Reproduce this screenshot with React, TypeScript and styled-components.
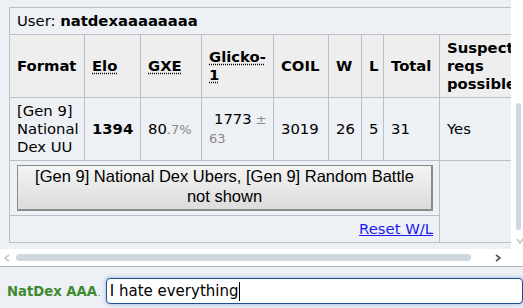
import React from "react";
import styled, { createGlobalStyle } from "styled-components";

const GlobalStyle = createGlobalStyle`
  html, body { margin: 0; padding: 0; }
  body {
    background: #edf0f4;
    font-family: "DejaVu Sans", Verdana, sans-serif;
  }
`;

const Frame = styled.div`
  width: 523px;
  height: 308px;
  display: flex;
  flex-direction: column;
  overflow: hidden;
  background: #edf0f4;
`;

const Viewport = styled.div`
  display: grid;
  grid-template-columns: 511px 12px;
  grid-template-rows: 249px 17px;
  border-bottom: 1px solid #b0b5ba;
`;

const Content = styled.div`
  overflow: hidden;
  padding: 7px 0 0 9px;
`;

const Table = styled.table`
  border-collapse: collapse;
  table-layout: fixed;
  width: 530px;
  font-size: 14.8px;
  line-height: 18px;
  color: #000;

  td,
  th {
    border: 1px solid #bcc0c4;
    padding: 4px 7px;
    text-align: left;
    vertical-align: middle;
    overflow: hidden;
    white-space: normal;
  }
`;

const HeadCell = styled.th`
  background: #eeeeee;
  font-weight: bold;
`;

const Abbr = styled.abbr`
  text-decoration: underline dotted;
  text-underline-offset: 2px;
`;

const Muted = styled.small`
  color: #888;
  font-size: 13px;
`;

const GlickoCell = styled.td`
  && {
    padding-right: 2px;
  }
`;

const Rating = styled.span`
  margin-left: 5px;
`;

const ButtonCell = styled.td`
  && {
    padding: 4px 6px 4px 7px;
  }
`;

const Button = styled.button`
  display: block;
  width: 100%;
  height: 46px;
  padding: 0 4px 4px;
  font-family: "Liberation Sans", Arial, sans-serif;
  font-size: 16.5px;
  line-height: 20px;
  color: #000;
  background: linear-gradient(#f4f4f4, #dcdcdc);
  border-style: solid;
  border-color: #8a8a8a;
  border-width: 1px 2px 2px 1px;
  border-radius: 0;
  text-align: center;
`;

const LinkCell = styled.td`
  && {
    text-align: right;
    padding-right: 6px;
  }
`;

const Link = styled.a`
  color: #1a1aee;
  text-decoration: underline;
`;

const VScroll = styled.div`
  background: #fff;
  display: flex;
  flex-direction: column;
  align-items: flex-start;
  padding: 103px 0 0 5px;
`;

const VThumb = styled.div`
  width: 5px;
  height: 127px;
  border-radius: 3px;
  background: #cfd7df;
`;

const HScroll = styled.div`
  grid-column: 1 / span 2;
  background: #fff;
  display: flex;
  align-items: center;
  padding: 0 0 0 4px;
`;

const HThumb = styled.div`
  width: 455px;
  height: 7px;
  margin: 0 24px 0 6px;
  border-radius: 4px;
  background: #cfd7df;
`;

const ChatBar = styled.div`
  display: flex;
  align-items: center;
  padding: 11px 0 0 7px;
`;

const Name = styled.span`
  flex: none;
  white-space: nowrap;
  font-weight: bold;
  font-size: 13.2px;
  color: #3f8a2e;
`;

const Dot = styled.span`
  flex: none;
  font-size: 9px;
  color: #556;
  margin: 4px 5px 0 1px;
`;

const Input = styled.div`
  flex: none;
  box-sizing: border-box;
  width: 417px;
  height: 26px;
  display: flex;
  align-items: center;
  padding: 0 3px;
  background: #fff;
  border: 1px solid #1e4f8f;
  border-radius: 4px;
  box-shadow: 0 0 4px rgba(60, 130, 210, 0.55);
  font-size: 15px;
  color: #000;
  white-space: pre;
`;

const Caret = styled.span`
  display: inline-block;
  width: 1px;
  height: 19px;
  margin-left: 1px;
  background: #000;
`;

const Chevron = ({ dir, color }: { dir: "left" | "right" | "down"; color: string }) => {
  const d =
    dir === "left" ? "M5 1 L1 4 L5 7" : dir === "right" ? "M1 1 L5 4 L1 7" : "M1 1 L4 5 L7 1";
  const w = dir === "down" ? 8 : 6;
  const h = dir === "down" ? 6 : 8;
  return (
    <svg width={w} height={h} viewBox={`0 0 ${w} ${h}`} style={{ flex: "none" }}>
      <path d={d} fill="none" stroke={color} strokeWidth="1.6" />
    </svg>
  );
};

const DownArrow = styled.div`
  margin: 8px 0 0 0;
  display: flex;
`;

export default function App() {
  return (
    <Frame>
      <GlobalStyle />
      <Viewport>
        <Content>
          <Table>
            <colgroup>
              <col style={{ width: 75 }} />
              <col style={{ width: 56 }} />
              <col style={{ width: 61 }} />
              <col style={{ width: 72 }} />
              <col style={{ width: 55 }} />
              <col style={{ width: 33 }} />
              <col style={{ width: 22 }} />
              <col style={{ width: 56 }} />
              <col style={{ width: 100 }} />
            </colgroup>
            <tbody>
              <tr>
                <td colSpan={9}>
                  User: <strong>natdexaaaaaaaa</strong>
                </td>
              </tr>
              <tr>
                <HeadCell>Format</HeadCell>
                <HeadCell>
                  <Abbr>Elo</Abbr>
                </HeadCell>
                <HeadCell>
                  <Abbr>GXE</Abbr>
                </HeadCell>
                <HeadCell>
                  <Abbr>Glicko-1</Abbr>
                </HeadCell>
                <HeadCell>COIL</HeadCell>
                <HeadCell>W</HeadCell>
                <HeadCell>L</HeadCell>
                <HeadCell>Total</HeadCell>
                <HeadCell>Suspect reqs possible?</HeadCell>
              </tr>
              <tr>
                <td>[Gen 9] National Dex UU</td>
                <td>
                  <strong>1394</strong>
                </td>
                <td>
                  80<Muted>.7%</Muted>
                </td>
                <GlickoCell>
                  <Rating>1773</Rating>
                  <Muted> ± 63</Muted>
                </GlickoCell>
                <td>3019</td>
                <td>26</td>
                <td>5</td>
                <td>31</td>
                <td>Yes</td>
              </tr>
              <tr>
                <ButtonCell colSpan={8}>
                  <Button>[Gen 9] National Dex Ubers, [Gen 9] Random Battle not shown</Button>
                </ButtonCell>
                <td rowSpan={2}></td>
              </tr>
              <tr>
                <LinkCell colSpan={8}>
                  <Link href="#">Reset W/L</Link>
                </LinkCell>
              </tr>
            </tbody>
          </Table>
        </Content>
        <VScroll>
          <VThumb />
          <DownArrow>
            <Chevron dir="down" color="#c4c9ce" />
          </DownArrow>
        </VScroll>
        <HScroll>
          <Chevron dir="left" color="#c4c9ce" />
          <HThumb />
          <Chevron dir="right" color="#555" />
        </HScroll>
      </Viewport>
      <ChatBar>
        <Name>NatDex AAA</Name>
        <Dot>.</Dot>
        <Input>
          I hate everything
          <Caret />
        </Input>
      </ChatBar>
    </Frame>
  );
}
